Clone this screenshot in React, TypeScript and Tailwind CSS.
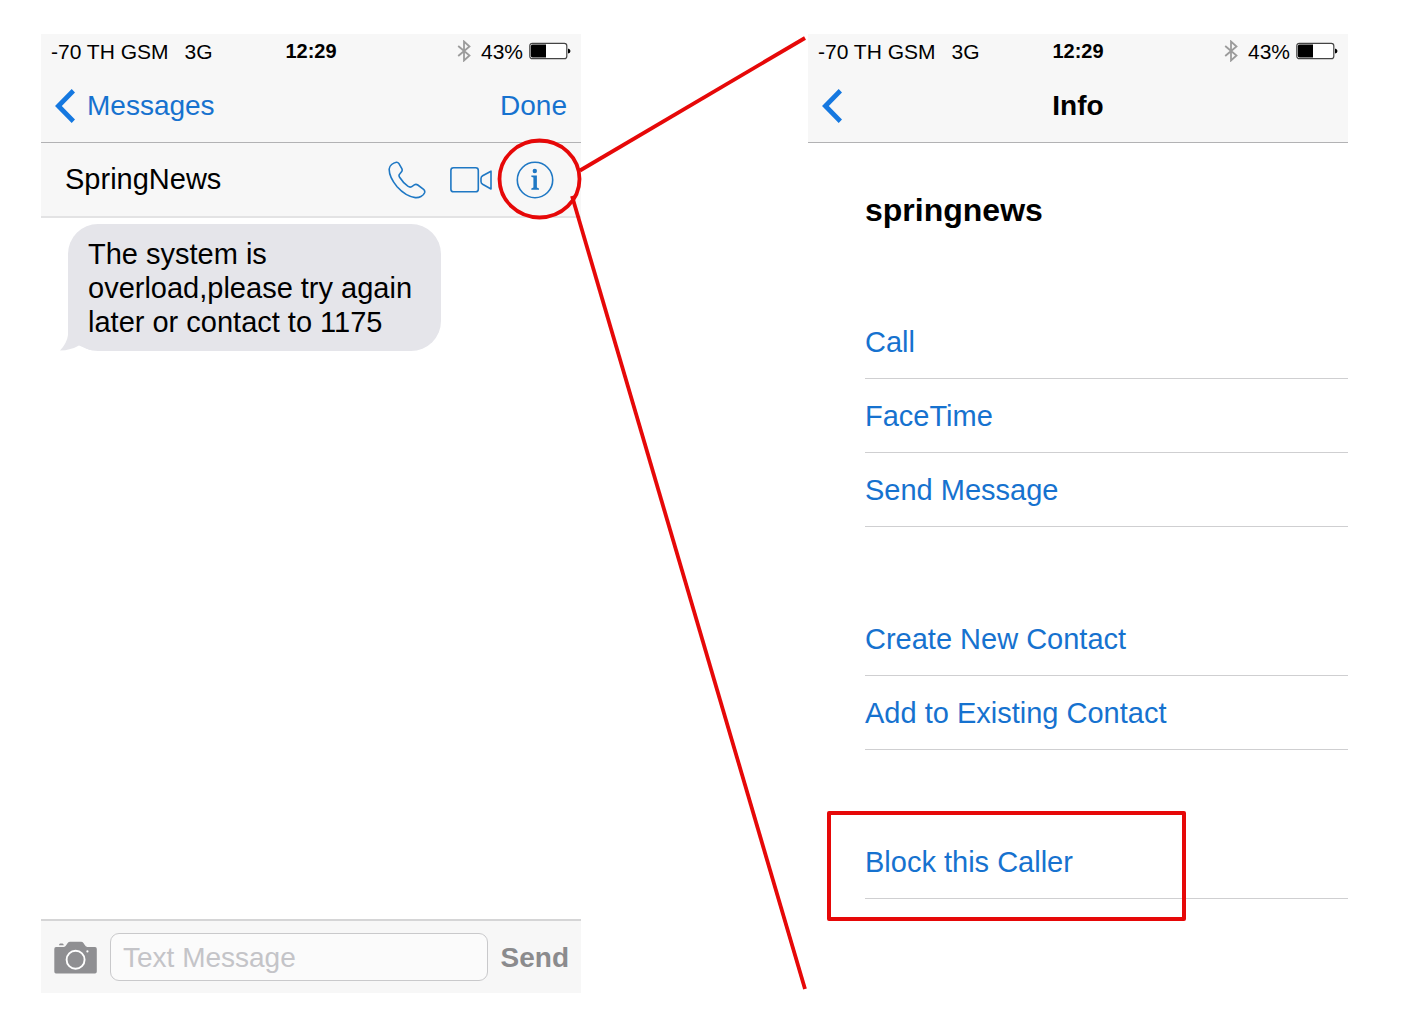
import type { ReactNode } from "react";

const contactActions = [
  ["Call", "FaceTime", "Send Message"],
  ["Create New Contact", "Add to Existing Contact"],
];

function BluetoothIcon() {
  return (
    <svg viewBox="0 0 14 22" className="h-[22px] w-[14px]" fill="none" stroke="#9b9b9b" strokeWidth="1.8" aria-hidden="true">
      <path d="M1.2 6 L12.5 15.5 L7 20.5 V1.5 L12.5 6.5 L1.2 16" />
    </svg>
  );
}

function BatteryIcon() {
  return (
    <svg viewBox="0 0 42 18" className="h-[18px] w-[42px]" aria-hidden="true">
      <rect x="0.8" y="1.3" width="37" height="15.4" rx="2.5" fill="#fff" stroke="#444" strokeWidth="1.2" />
      <path d="M3.5 2.4 H17 V15.6 H3.5 Q1.8 15.6 1.8 13.5 V4.5 Q1.8 2.4 3.5 2.4 Z" />
      <path d="M39 6.5 Q41.5 7 41.5 9 Q41.5 11 39 11.5 Z" />
    </svg>
  );
}

function BackIcon() {
  return (
    <svg viewBox="0 0 20 34" className="h-[34px] w-[20px]" fill="none" stroke="#1578e0" strokeWidth="4.8" aria-hidden="true">
      <path d="M18.4 1.8 L3.4 17 L18.4 32.2" />
    </svg>
  );
}

function PhoneIcon() {
  return (
    <svg viewBox="0 0 38 38" className="size-[38px]" fill="none" stroke="#1f78c4" strokeWidth="1.6" strokeLinejoin="round" aria-hidden="true">
      <path d="M8.4 1.2 C5 1.8 1.4 4.5 1.2 8 C1 13.5 4.3 20 9.1 25.7 C14.3 31.5 20.8 35.6 27.3 36.6 C31.3 37 35.3 35 36.6 31.8 C37 30.2 36.8 29.2 35.6 28.3 L29.8 24 C28.6 23.2 27.4 23.2 26.3 23.9 L23.4 25.8 C22.2 26.4 21.1 26.1 19.8 25.2 C16.5 22.8 13.8 19.8 11.6 16.3 C10.8 15.1 10.8 14 11.7 13 L13.7 10.6 C14.4 9.6 14.3 8.5 13.7 7.4 L10.8 2.4 C10.2 1.5 9.5 1.1 8.4 1.2 Z" />
    </svg>
  );
}

function VideoIcon() {
  return (
    <svg viewBox="0 0 42 28" className="h-[28px] w-[42px]" fill="none" stroke="#1f78c4" strokeWidth="1.6" strokeLinejoin="round" aria-hidden="true">
      <rect x="0.9" y="1.8" width="27.4" height="24" rx="2.6" />
      <path d="M41 5.2 V23 L32.6 18.3 Q31 17.3 31 15.6 V12.4 Q31 10.8 32.6 9.8 Z" />
    </svg>
  );
}

function InfoIcon() {
  return (
    <svg viewBox="0 0 38 38" className="size-[38px]" fill="#1f78c4" aria-hidden="true">
      <circle cx="19" cy="19" r="17.7" fill="none" stroke="#1f78c4" strokeWidth="1.6" />
      <circle cx="18.8" cy="10" r="2.2" />
      <path d="M15.3 14.6 H20.9 V26.6 L23 27.4 V28.7 H15.3 V27.4 L17.4 26.6 V16.4 L15.3 15.7 Z" />
    </svg>
  );
}

function CameraIcon() {
  return (
    <svg viewBox="0 0 43 33" className="h-[33px] w-[43px]" aria-hidden="true">
      <path
        fill="#8f8f92"
        d="M2 6 H10 Q11.5 5.6 12.5 3.8 L13.7 2 Q14.6 0.8 16.2 0.8 H27 Q28.6 0.8 29.4 2 L30.6 3.8 Q31.6 5.6 33.2 6 H41 Q42.8 6 42.8 8 V30.4 Q42.8 32.4 41 32.4 H2 Q0.3 32.4 0.3 30.4 V8 Q0.3 6 2 6 Z"
      />
      <path fill="#8f8f92" d="M6.2 2.4 H8.5 Q9.5 2.6 9.8 4.2 H5 Q5.2 2.6 6.2 2.4 Z" />
      <circle cx="21.6" cy="18.8" r="9" fill="none" stroke="#fff" strokeWidth="1.9" />
      <circle cx="33.4" cy="10.4" r="1.1" fill="#fff" />
    </svg>
  );
}

function StatusBar() {
  return (
    <div className="grid h-[34px] grid-cols-[1fr_auto_1fr] items-center px-[10px] text-[21px] leading-none">
      <div className="flex gap-4 whitespace-nowrap">
        <span>-70 TH GSM</span>
        <span>3G</span>
      </div>
      <span className="text-[20px] font-bold">12:29</span>
      <div className="flex items-center justify-end">
        <BluetoothIcon />
        <span className="mr-1.5 ml-2.5">43%</span>
        <BatteryIcon />
      </div>
    </div>
  );
}

function TopBar({ children }: { children: ReactNode }) {
  return (
    <header className="border-b border-[#b2b2b4] bg-[#f7f7f7]">
      <StatusBar />
      <nav className="grid h-[74px] grid-cols-[1fr_auto_1fr] items-center px-[14px] pt-0.5 text-[28px]">{children}</nav>
    </header>
  );
}

function ActionRow({ label }: { label: string }) {
  return (
    <li className="h-[74px] border-b border-[#cfcfd1]">
      <button type="button" className="h-full w-full pt-0.5 text-left text-[29px] text-[#1672cf]">
        {label}
      </button>
    </li>
  );
}

function MessagesScreen() {
  return (
    <section className="flex min-w-0 flex-1 flex-col">
      <TopBar>
        <a href="#messages" className="flex items-center gap-3 text-[#1672cf]">
          <BackIcon />
          Messages
        </a>
        <span />
        <button type="button" className="justify-self-end text-[#1672cf]">
          Done
        </button>
      </TopBar>
      <div className="flex h-[75px] items-center border-b-2 border-[#e3e3e4] bg-[#f7f7f7] pr-[27px] pl-6">
        <h2 className="flex-1 text-[29px]">SpringNews</h2>
        <div className="flex items-center gap-6">
          <button type="button" aria-label="Call">
            <PhoneIcon />
          </button>
          <button type="button" aria-label="FaceTime">
            <VideoIcon />
          </button>
          <button type="button" aria-label="Info">
            <InfoIcon />
          </button>
        </div>
      </div>
      <div className="flex-1 pt-[6px] pl-[27px]">
        <div className="relative max-w-[373px] rounded-[30px] bg-[#e5e5ea] px-5 pt-[13px] pb-3 text-[29px] leading-[34px]">
          <svg viewBox="0 0 30 34" className="absolute bottom-0 -left-2 h-[34px] w-[30px]" fill="#e5e5ea" aria-hidden="true">
            <path d="M8 0 V18 Q7 26 0 33.6 Q11 33.2 19 28.5 L30 33 V0 Z" />
          </svg>
          <p className="relative">The system is overload,please try again later or contact to 1175</p>
        </div>
      </div>
      <form className="flex items-center border-t-2 border-[#d5d5d6] bg-[#f7f7f7] py-3 pr-3 pl-[13px]">
        <button type="button" aria-label="Attach photo">
          <CameraIcon />
        </button>
        <input
          type="text"
          aria-label="Text Message"
          placeholder="Text Message"
          className="mx-[13px] h-12 min-w-0 flex-1 rounded-[9px] border border-[#c9c9cb] bg-[#fbfbfb] px-3 pt-0.5 text-[28px] placeholder:text-[#c4c4c8]"
        />
        <button type="button" className="pt-0.5 text-[28px] font-bold text-[#8b8b8d]">
          Send
        </button>
      </form>
    </section>
  );
}

// red ring round the info button, with the two lines that open out to the info screen
function Callout() {
  return (
    <div className="relative w-[227px] shrink-0">
      <svg
        viewBox="0 0 227 959"
        className="pointer-events-none absolute top-0 left-0 z-10 h-[959px] w-[227px] overflow-visible"
        fill="none"
        stroke="#e60808"
        strokeWidth="3.8"
        aria-hidden="true"
      >
        <ellipse cx="-41.5" cy="145" rx="40" ry="38.5" />
        <path d="M-1 136.5 L224 4" />
        <path d="M-9 162 L224 955" />
      </svg>
    </div>
  );
}

function InfoScreen() {
  return (
    <section className="min-w-0 flex-1">
      <TopBar>
        <a href="#back" aria-label="Back" className="justify-self-start">
          <BackIcon />
        </a>
        <h1 className="font-bold">Info</h1>
      </TopBar>
      <div className="pl-[57px]">
        <h2 className="py-[43px] text-[32px] leading-[48px] font-bold">springnews</h2>
        <div className="mt-7 space-y-[75px]">
          {contactActions.map((group) => (
            <ul key={group[0]}>
              {group.map((label) => (
                <ActionRow key={label} label={label} />
              ))}
            </ul>
          ))}
          <div className="relative">
            <ul>
              <ActionRow label="Block this Caller" />
            </ul>
            <div className="pointer-events-none absolute -top-[14px] -left-[38px] h-[110px] w-[359px] rounded-xs border-4 border-[#e60808]" />
          </div>
        </div>
      </div>
    </section>
  );
}

export default function App() {
  return (
    <main className="flex min-h-screen bg-white pt-[34px] pr-[67px] pb-[29px] pl-[41px] font-['Liberation_Sans',Arial,sans-serif] text-black">
      <MessagesScreen />
      <Callout />
      <InfoScreen />
    </main>
  );
}
